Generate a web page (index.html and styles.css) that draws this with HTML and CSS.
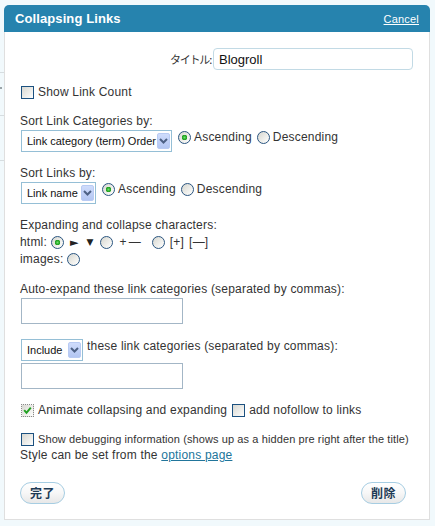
FILE: index.html
```html
<!DOCTYPE html>
<html>
<head>
<meta charset="utf-8">
<title>Collapsing Links</title>
<link rel="stylesheet" href="styles.css">
</head>
<body>
<div class="dialog">
  <div class="header">
    <span class="title">Collapsing Links</span>
    <a class="cancel" href="#">Cancel</a>
  </div>
  <div class="body">
    <div class="row-title">
      <label class="jp-label">タイトル:</label>
      <input class="title-input" type="text" value="Blogroll">
    </div>

    <div class="line s-count">
      <span class="cb"></span><span class="lbl">Show Link Count</span>
    </div>

    <div class="line s-label">Sort Link Categories by:</div>
    <div class="opts">
      <span class="sel w150"><select><option>Link category (term) Order</option></select><span class="arrow"><svg width="9" height="6" viewBox="0 0 9 6"><path d="M1 1 L4.5 4.5 L8 1" fill="none" stroke="#4d6185" stroke-width="2"/></svg></span></span>
      <span class="rb on first"></span><span class="opt">Ascending</span>
      <span class="rb"></span><span class="opt">Descending</span>
    </div>

    <div class="line s-label">Sort Links by:</div>
    <div class="opts">
      <span class="sel w75"><select><option>Link name</option></select><span class="arrow"><svg width="9" height="6" viewBox="0 0 9 6"><path d="M1 1 L4.5 4.5 L8 1" fill="none" stroke="#4d6185" stroke-width="2"/></svg></span></span>
      <span class="rb on first"></span><span class="opt">Ascending</span>
      <span class="rb"></span><span class="opt">Descending</span>
    </div>

    <div class="chars">
      <div class="cline">Expanding and collapse characters:</div>
      <div class="cline crow">
        <span>html:</span>
        <span class="rb on m4"></span>
        <span class="glyph right m6">►</span>
        <span class="glyph down m9">▼</span>
        <span class="rb m7"></span>
        <span class="m6">+</span>
        <span class="m2">—</span>
        <span class="rb m11"></span>
        <span class="m5">[+]</span>
        <span class="m5">[—]</span>
      </div>
      <div class="cline crow">
        <span>images:</span>
        <span class="rb m4"></span>
      </div>
    </div>

    <div class="line s-auto">Auto-expand these link categories (separated by commas):</div>
    <input class="text-input t1" type="text">

    <div class="opts s-incl">
      <span class="sel w62"><select class="small"><option>Include</option></select><span class="arrow"><svg width="9" height="6" viewBox="0 0 9 6"><path d="M1 1 L4.5 4.5 L8 1" fill="none" stroke="#4d6185" stroke-width="2"/></svg></span></span>
      <span class="opt incl-txt">these link categories (separated by commas):</span>
    </div>
    <input class="text-input t2" type="text">

    <div class="line s-anim">
      <span class="cb checked"><svg width="9" height="9" viewBox="0 0 9 9"><path d="M1.2 4.2 L3.5 6.8 L7.8 1.6" fill="none" stroke="#21a121" stroke-width="2"/></svg></span><span class="lbl">Animate collapsing and expanding</span>
      <span class="cb m5"></span><span class="lbl">add nofollow to links</span>
    </div>

    <div class="s-debug">
      <div class="line"><span class="cb"></span><span class="lbl small-lbl">Show debugging information (shows up as a hidden pre right after the title)</span></div>
      <div class="line">Style can be set from the <a class="link" href="#">options page</a></div>
    </div>

    <div class="buttons">
      <button class="btn">完了</button>
      <button class="btn">削除</button>
    </div>
  </div>
</div>
</body>
</html>
```

FILE: styles.css
```css
* { box-sizing: border-box; }
html, body { margin: 0; }
body {
  background-color: #f1f9fc;
  background-image:
    linear-gradient(#d6dde0, #d6dde0),
    linear-gradient(#d6dde0, #d6dde0),
    linear-gradient(#d6dde0, #d6dde0),
    linear-gradient(#9aa4a8, #9aa4a8);
  background-size: 4px 1px, 4px 1px, 4px 1px, 2px 2px;
  background-position: 0 72px, 0 115px, 0 160px, 0 87px;
  background-repeat: no-repeat;
  font-family: "Liberation Sans", Arial, sans-serif;
  font-size: 12px;
  letter-spacing: 0.2px;
  color: #333;
  padding-top: 5px;
  height: 526px;
  overflow: hidden;
}
.dialog { margin-left: 4px; width: 426px; }
.header {
  height: 27px;
  background: #2683ae;
  border-radius: 5px 5px 0 0;
  display: flex;
  align-items: center;
  justify-content: space-between;
  padding: 0 11px 0 11px;
}
.title { color: #fff; font-weight: bold; font-size: 13px; letter-spacing: 0.1px; }
.cancel { color: #fff; font-size: 11px; text-decoration: underline; letter-spacing: 0.2px; }
.body {
  background: #fff;
  border: 1px solid #dfdfdf;
  border-top: 0;
  padding: 16px 16px 15px 15px;
  display: flex;
  flex-direction: column;
  align-items: flex-start;
}
.row-title {
  align-self: stretch;
  display: flex;
  justify-content: flex-end;
  align-items: center;
  height: 22px;
}
.jp-label {
  font-family: "Noto Sans CJK JP", sans-serif;
  font-size: 11px;
  letter-spacing: -1.2px;
  color: #333;
  margin-right: 2px;
}
.title-input {
  width: 200px;
  height: 22px;
  border: 1px solid #c2dae5;
  border-radius: 4px;
  padding: 0 0 0 5px;
  font-family: "Liberation Sans", Arial, sans-serif;
  font-size: 13px;
  color: #111;
  outline: none;
}
.line { display: flex; align-items: center; height: 16px; line-height: 16px; white-space: pre; }
.s-count { margin-top: 14px; }
.s-label { margin-top: 13px; }
.cb {
  width: 13px;
  height: 13px;
  margin-left: 1px;
  border: 1px solid #1c5180;
  background: linear-gradient(135deg, #d8d8d2 0%, #f6f6f4 80%, #fff 100%);
  display: inline-flex;
  align-items: center;
  justify-content: center;
  flex: none;
}
.cb.checked { border: 1px dotted #8a8a8a; }
.cb.m5 { margin-left: 5px; }
.lbl { margin-left: 4px; }
.small-lbl { font-size: 11px; letter-spacing: 0.1px; }
.opts {
  display: flex;
  align-items: flex-start;
  margin-top: 1px;
}
.sel {
  position: relative;
  display: inline-block;
  height: 22px;
  margin-left: 1px;
  border: 1px solid #95bfd6;
  background: #fff;
  flex: none;
}
.sel select {
  appearance: none;
  -webkit-appearance: none;
  border: 0;
  background: transparent;
  height: 20px;
  width: 100%;
  padding: 0 0 0 5px;
  font-family: "Liberation Sans", Arial, sans-serif;
  font-size: 11px;
  letter-spacing: 0;
  color: #111;
  outline: none;
}
.w150 { width: 151px; }
.w75 { width: 75px; }
.w62 { width: 62px; }
.arrow {
  position: absolute;
  right: 1px;
  top: 2px;
  width: 13px;
  height: 16px;
  border-radius: 2px;
  background: linear-gradient(#cfdcfc, #b3c6f2);
  border: 1px solid #b9cbf3;
  display: flex;
  align-items: center;
  justify-content: center;
}
.rb {
  width: 13px;
  height: 13px;
  border-radius: 50%;
  border: 1px solid #2a5580;
  background: linear-gradient(135deg, #d6d6cf 0%, #f4f4f1 70%, #fff 100%);
  flex: none;
  margin-left: 5px;
  margin-top: 1px;
  display: inline-block;
}
.rb.on {
  background:
    radial-gradient(circle at 50% 50%, #6ee06e 0, #2fb12f 1.6px, #1f9a1f 2.6px, rgba(31,154,31,0) 3px),
    linear-gradient(135deg, #d6d6cf 0%, #f4f4f1 70%, #fff 100%);
}
.rb.first { margin-left: 6px; }
.opt { margin-left: 3px; line-height: 15px; }
.incl-txt { margin-left: 4px; }
.chars { margin-top: 13px; }
.cline { height: 17px; line-height: 17px; }
.crow { display: flex; align-items: center; }
.crow .rb { margin-top: 0; }
.glyph { font-family: "DejaVu Sans", sans-serif; color: #222; letter-spacing: 0; }
.glyph.right { font-size: 11px; }
.glyph.down { font-size: 9px; }
.m2 { margin-left: 2px; }
.m4 { margin-left: 4px !important; }
.m5 { margin-left: 5px; }
.m6 { margin-left: 6px; }
.m7 { margin-left: 7px !important; }
.m9 { margin-left: 8px; }
.m11 { margin-left: 11px !important; }
.s-auto { margin-top: 13px; }
.text-input {
  width: 162px;
  height: 26px;
  margin-left: 1px;
  border: 1px solid #a3b6c6;
  background: #fff;
  outline: none;
  padding: 0 4px;
  font-family: "Liberation Sans", Arial, sans-serif;
  font-size: 12px;
}
.t1 { margin-top: 1px; }
.s-incl { margin-top: 15px; }
.t2 { margin-top: 2px; }
.s-anim { margin-top: 13px; }
.s-debug { margin-top: 13px; }
.link { color: #21759b; text-decoration: underline; }
.buttons {
  align-self: stretch;
  display: flex;
  justify-content: space-between;
  margin-top: 19px;
  padding-right: 7px;
}
.btn {
  width: 45px;
  height: 22px;
  border-radius: 11px;
  border: 1px solid #a6cde2;
  background: linear-gradient(#ffffff 0%, #f7f7f7 50%, #e8e8e8 100%);
  font-family: "Noto Sans CJK JP", sans-serif;
  font-size: 12px;
  font-weight: 600;
  color: #1d3b56;
  padding: 0;
  line-height: 20px;
  letter-spacing: 0.5px;
}
```
